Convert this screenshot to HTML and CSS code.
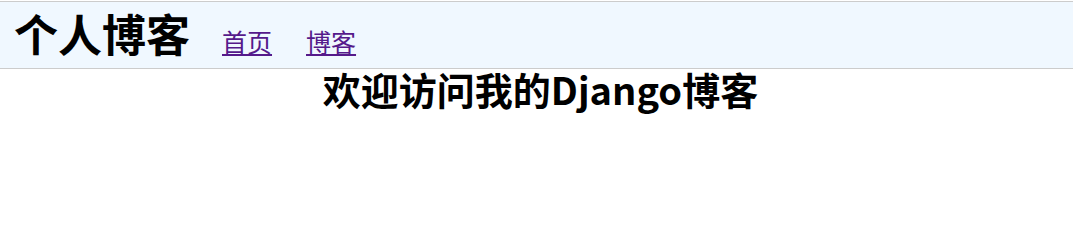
FILE: index.html
```html
<!DOCTYPE html>
<html lang="zh">
<head>
<meta charset="utf-8">
<title>个人博客</title>
<link rel="stylesheet" href="styles.css">
</head>
<body>
<header class="site-header">
  <span class="brand">个人博客</span>
  <nav class="nav">
    <a class="nav-link" href="#">首页</a>
    <a class="nav-link" href="#">博客</a>
  </nav>
</header>
<main class="content">
  <h1 class="welcome">欢迎访问我的Django博客</h1>
</main>
</body>
</html>
```
FILE: styles.css
```css
html, body {
  margin: 0;
  padding: 0;
  background: #ffffff;
  font-family: "Noto Sans CJK SC", "Noto Sans", sans-serif;
}

body {
  min-height: 233px;
}

.site-header {
  margin-top: 1px;
  border-top: 1px solid #cccccc;
  border-bottom: 1px solid #cccccc;
  background: #f0f8ff;
  height: 66px;
  box-sizing: content-box;
  display: flex;
  align-items: baseline;
  padding: 0 14px;
}

.brand {
  font-size: 44px;
  font-weight: 700;
  color: #000;
  line-height: 62px;
}

.nav {
  display: flex;
  gap: 34px;
  margin-left: 32px;
}

.nav-link {
  font-size: 25px;
  color: #551a8b;
  text-decoration: underline;
}

.content {
  text-align: center;
  padding-left: 8px;
  padding-bottom: 40px;
}

.welcome {
  margin: 0;
  font-size: 38px;
  font-weight: 700;
  line-height: 40px;
  color: #000;
}
```
